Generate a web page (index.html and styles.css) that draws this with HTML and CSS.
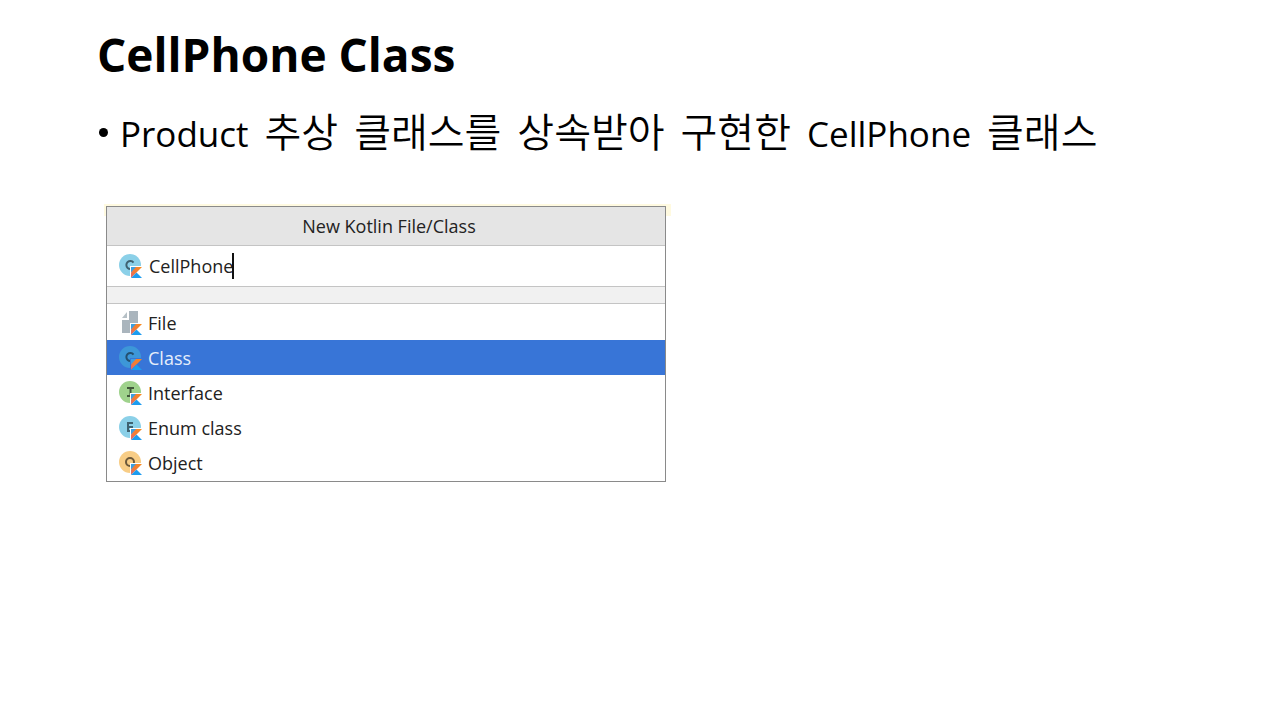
FILE: index.html
```html
<!DOCTYPE html>
<html lang="ko">
<head>
<meta charset="utf-8">
<title>CellPhone Class</title>
<link rel="stylesheet" href="styles.css">
</head>
<body>
<svg class="defs" aria-hidden="true">
  <defs>
    <linearGradient id="flame" x1="0" y1="1" x2="1" y2="0">
      <stop offset="0" stop-color="#d9657a"/>
      <stop offset="0.4" stop-color="#f07a3c"/>
      <stop offset="1" stop-color="#f98a1c"/>
    </linearGradient>
    <symbol id="kotlin" viewBox="0 0 11 11">
      <path d="M0 0h6L0 6z" fill="#3d9fe0"/>
      <path d="M5 0h6L0 11V5.500z" fill="url(#flame)"/>
      <path d="M0 11l5.500-5.500L11 11z" fill="#1c9cf0"/>
    </symbol>
  </defs>
</svg>
<main class="slide">
  <h1 class="title">CellPhone Class</h1>
  <ul class="points">
    <li class="point"><span class="latin">Product</span> <span>추상</span> <span>클래스를</span> <span>상속받아</span> <span>구현한</span> <span class="latin">CellPhone</span> <span>클래스</span></li>
  </ul>
  <section class="dialog" aria-labelledby="dialog-title">
    <h2 class="dialog-title" id="dialog-title">New Kotlin File/Class</h2>
    <div class="name-row">
      <svg class="icon" viewBox="0 0 23 24" aria-hidden="true"><circle cx="11" cy="11" r="11" fill="#8bd0e8"/><path d="M14.500 8.500a4 4 0 1 0 0 5" fill="none" stroke="#3f6270" stroke-width="2"/><path d="M11 12h12v12H11z" fill="#fff"/><use href="#kotlin" x="12" y="13" width="11" height="11"/></svg>
      <div class="name-field"><input class="name" id="name" type="text" value="CellPhone" aria-label="Name"><span class="caret"></span></div>
    </div>
    <div class="band"></div>
    <div class="kinds">
      <button class="kind" type="button">
        <svg class="icon" viewBox="0 0 23 24" aria-hidden="true"><path d="M10 0h9v22H3V9h7z" fill="#aab5bd"/><path d="M8 1v6H3z" fill="#b6c0c6"/><path d="M11 12h12v12H11z" fill="#fff"/><use href="#kotlin" x="12" y="13" width="11" height="11"/></svg>
        File</button>
      <button class="kind selected" type="button">
        <svg class="icon" viewBox="0 0 23 24" aria-hidden="true"><circle cx="11" cy="11" r="11" fill="#3d97d8"/><path d="M14.500 8.500a4 4 0 1 0 0 5" fill="none" stroke="#24506f" stroke-width="2"/><path d="M11 12h12v12H11z" fill="#3875d7"/><use href="#kotlin" x="12" y="13" width="11" height="11"/></svg>
        Class</button>
      <button class="kind" type="button">
        <svg class="icon" viewBox="0 0 23 24" aria-hidden="true"><circle cx="11" cy="11" r="11" fill="#9fd28c"/><path d="M8 7h7M11.500 7v8M8 15h7" fill="none" stroke="#42583b" stroke-width="2"/><path d="M11 12h12v12H11z" fill="#fff"/><use href="#kotlin" x="12" y="13" width="11" height="11"/></svg>
        Interface</button>
      <button class="kind" type="button">
        <svg class="icon" viewBox="0 0 23 24" aria-hidden="true"><circle cx="11" cy="11" r="11" fill="#8bd0e8"/><path d="M14 7H9v8h5M9 11h5" fill="none" stroke="#3f6270" stroke-width="2"/><path d="M11 12h12v12H11z" fill="#fff"/><use href="#kotlin" x="12" y="13" width="11" height="11"/></svg>
        Enum class</button>
      <button class="kind" type="button">
        <svg class="icon" viewBox="0 0 23 24" aria-hidden="true"><circle cx="11" cy="11" r="11" fill="#f8cd86"/><circle cx="11" cy="11" r="4" fill="none" stroke="#6b583a" stroke-width="2"/><path d="M11 12h12v12H11z" fill="#fff"/><use href="#kotlin" x="12" y="13" width="11" height="11"/></svg>
        Object</button>
    </div>
  </section>
</main>
</body>
</html>
```
FILE: styles.css
```css
* { box-sizing: border-box; }

body {
  margin: 0;
  background: #fff;
  color: #000;
  font-family: "Open Sans", "Noto Sans CJK KR", sans-serif;
}

.defs {
  position: absolute;
  width: 0;
  height: 0;
}

.slide { padding: 24px 97px; }

.title {
  margin: 0;
  font-size: 46px;
  font-weight: 700;
  line-height: 60px;
}

.points {
  margin: 16px 0 0;
  padding: 0;
  list-style: none;
}

.point {
  display: flex;
  flex-wrap: wrap;
  align-items: baseline;
  column-gap: 16px;
  font-family: "Noto Sans CJK KR", sans-serif;
  font-size: 40px;
  font-weight: 350;
  line-height: 60px;
}

.point::before {
  content: "";
  align-self: center;
  width: 9px;
  height: 9px;
  margin: 0 -4px 0 2px;
  border-radius: 50%;
  background: #000;
}

.latin {
  font-family: "Open Sans", sans-serif;
  font-size: 35px;
  font-weight: 400;
}

.dialog {
  position: relative;
  width: 560px;
  max-width: 100%;
  margin: 42px 0 0 9px;
  border: 1px solid #8a8a8a;
  background: #fff;
  color: #222;
  font-size: 18px;
}

.dialog::before {
  content: "";
  position: absolute;
  z-index: -1;
  top: -3px;
  right: -6px;
  left: -3px;
  height: 12px;
  background: #fffae0;
}

.dialog-title {
  margin: 0;
  padding-left: 6px;
  border-bottom: 1px solid #c4c4c4;
  background: #e5e5e5;
  font-size: 18px;
  font-weight: 400;
  line-height: 38px;
  text-align: center;
}

.name-row {
  display: flex;
  align-items: center;
  gap: 7px;
  height: 41px;
  padding-left: 12px;
  border-bottom: 1px solid #c4c4c4;
}

.name-field {
  display: flex;
  align-items: center;
}

.name {
  width: 83px;
  padding: 0;
  border: 0;
  outline: 0;
  background: none;
  color: inherit;
  font: inherit;
}

.caret {
  width: 2px;
  height: 26px;
  background: #111;
}

.band {
  height: 17px;
  border-bottom: 1px solid #c4c4c4;
  background: #f1f1f1;
}

.kinds { padding: 1px 0; }

.kind {
  display: flex;
  align-items: center;
  gap: 6px;
  width: 100%;
  height: 35px;
  padding: 0 12px;
  border: 0;
  background: none;
  color: inherit;
  font: inherit;
  text-align: left;
}

.selected {
  background: #3875d7;
  color: #e6eefb;
}

.icon {
  flex: none;
  width: 23px;
  height: 24px;
}
```
